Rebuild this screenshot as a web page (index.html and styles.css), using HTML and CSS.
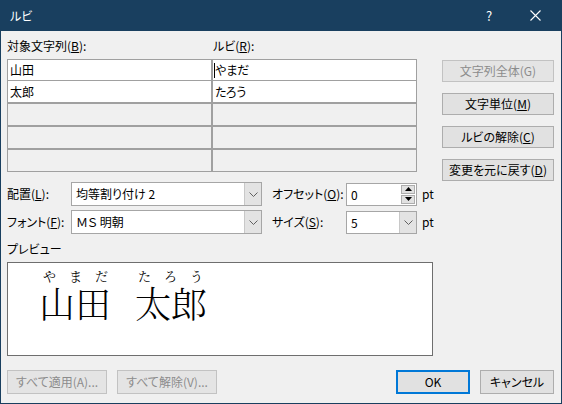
FILE: index.html
```html
<!DOCTYPE html>
<html lang="ja">
<head>
<meta charset="utf-8">
<title>ルビ</title>
<link rel="stylesheet" href="styles.css">
</head>
<body>
<div class="window">
  <div class="titlebar">
    <span class="title">ルビ</span>
    <span class="help">?</span>
    <span class="close">
      <svg width="11" height="11" viewBox="0 0 11 11"><path d="M0.5 0.5 L10.5 10.5 M10.5 0.5 L0.5 10.5" stroke="#fff" stroke-width="1.1" fill="none"/></svg>
    </span>
  </div>
  <div class="body">
    <div class="top">
      <div class="left">
        <div class="labels">
          <span>対象文字列(<u>B</u>):</span>
          <span>ルビ(<u>R</u>):</span>
        </div>
        <div class="table">
          <div class="cell">山田</div>
          <div class="cell"><span class="caret"></span>やまだ</div>
          <div class="cell">太郎</div>
          <div class="cell">たろう</div>
          <div class="cell empty"></div>
          <div class="cell empty"></div>
          <div class="cell empty"></div>
          <div class="cell empty"></div>
          <div class="cell empty"></div>
          <div class="cell empty"></div>
        </div>
        <div class="options">
          <span class="opt-label">配置(<u>L</u>):</span>
          <div class="combo">
            <span class="combo-text">均等割り付け 2</span>
            <span class="combo-arrow"><svg width="9" height="5" viewBox="0 0 9 5"><polyline points="0.5,0.5 4.5,4.5 8.5,0.5" fill="none" stroke="#606060" stroke-width="1"/></svg></span>
          </div>
          <span class="opt-label second">オフセット(<u>O</u>):</span>
          <div class="combo small">
            <span class="combo-text">0</span>
            <span class="spin">
              <span class="spin-btn"><svg width="7" height="4" viewBox="0 0 7 4"><polygon points="3.5,0 7,4 0,4" fill="#000"/></svg></span>
              <span class="spin-btn"><svg width="7" height="4" viewBox="0 0 7 4"><polygon points="0,0 7,0 3.5,4" fill="#000"/></svg></span>
            </span>
          </div>
          <span class="unit">pt</span>

          <span class="opt-label">フォント(<u>F</u>):</span>
          <div class="combo">
            <span class="combo-text">ＭＳ 明朝</span>
            <span class="combo-arrow"><svg width="9" height="5" viewBox="0 0 9 5"><polyline points="0.5,0.5 4.5,4.5 8.5,0.5" fill="none" stroke="#606060" stroke-width="1"/></svg></span>
          </div>
          <span class="opt-label second">サイズ(<u>S</u>):</span>
          <div class="combo small">
            <span class="combo-text">5</span>
            <span class="combo-arrow"><svg width="9" height="5" viewBox="0 0 9 5"><polyline points="0.5,0.5 4.5,4.5 8.5,0.5" fill="none" stroke="#606060" stroke-width="1"/></svg></span>
          </div>
          <span class="unit">pt</span>
        </div>
        <div class="preview-label">プレビュー</div>
        <div class="preview">
          <div class="rgroup">
            <div class="rt"><span>や</span><span>ま</span><span>だ</span></div>
            <div class="rb">山田</div>
          </div>
          <div class="rgroup g2">
            <div class="rt"><span>た</span><span>ろ</span><span>う</span></div>
            <div class="rb">太郎</div>
          </div>
        </div>
      </div>
      <div class="side">
        <button class="btn disabled">文字列全体(G)</button>
        <button class="btn">文字単位(<u>M</u>)</button>
        <button class="btn">ルビの解除(<u>C</u>)</button>
        <button class="btn">変更を元に戻す(<u>D</u>)</button>
      </div>
    </div>
    <div class="footer">
      <button class="btn disabled wide">すべて適用(A)...</button>
      <button class="btn disabled wide">すべて解除(V)...</button>
      <button class="btn default narrow ok">OK</button>
      <button class="btn narrow">キャンセル</button>
    </div>
  </div>
</div>
</body>
</html>
```
FILE: styles.css
```css
* { box-sizing: border-box; }
html, body { margin: 0; padding: 0; background: #f0f0f0; }
body {
  font-family: "Noto Sans CJK JP", "Noto Sans", sans-serif;
  font-size: 12px;
  color: #000;
  font-feature-settings: "palt";
}
u { text-decoration: underline; text-underline-offset: 1px; }

.window {
  width: 562px;
  height: 404px;
  border: 1px solid #193f5f;
  border-top: none;
  background: #f0f0f0;
  overflow: hidden;
}
.titlebar {
  height: 31px;
  background: #193f5f;
  color: #fff;
  display: flex;
  align-items: center;
  padding-left: 9px;
}
.title { font-size: 12px; line-height: 16px; flex: 1; }
.help { font-size: 13px; line-height: 16px; width: 38px; margin-right: 4px; text-align: center; }
.close { width: 46px; display: flex; justify-content: center; align-items: center; margin-right: 3px; }
.close svg { display: block; }

.body { padding: 7px 7px 0 6px; }
.top { display: flex; align-items: flex-start; }
.left { width: 428px; }
.labels {
  display: grid;
  grid-template-columns: 206px 1fr;
  line-height: 16px;
  height: 16px;
  margin-bottom: 5px;
}
.table {
  width: 410px;
  display: grid;
  grid-template-columns: 203px 203px;
  grid-template-rows: 20px 21px 22px 22px 22px;
  column-gap: 2px;
  row-gap: 1px;
  background: #a0a0a0;
  border: 1px solid #a0a0a0;
}
.cell {
  background: #fff;
  padding-left: 2px;
  line-height: 20px;
  display: flex;
  align-items: center;
  white-space: nowrap;
}
.cell.empty { background: #f0f0f0; border-top: 1px solid #a0a0a0; }
.caret {
  display: inline-block;
  width: 1px;
  height: 15px;
  background: #000;
  margin-left: -1px;
}

.options {
  margin-top: 10px;
  display: grid;
  grid-template-columns: 64px 191px 84px 71px auto;
  grid-template-rows: 24px 24px;
  row-gap: 4px;
  align-items: center;
}
.opt-label { line-height: 16px; white-space: nowrap; }
.opt-label.second { padding-left: 10px; }
.combo {
  height: 24px;
  background: #fff;
  border: 1px solid #a6a6a6;
  display: flex;
  align-items: stretch;
}
.combo.small { height: 23px; }
.combo-text { flex: 1; padding-left: 4px; line-height: 21px; white-space: nowrap; }
.combo-arrow {
  width: 17px;
  background: #e3e3e3;
  border-left: 1px solid #c8c8c8;
  display: flex;
  align-items: center;
  justify-content: center;
}
.combo-arrow svg { display: block; }
.spin {
  width: 16px;
  display: flex;
  flex-direction: column;
  padding: 1px;
  gap: 1px;
}
.spin-btn {
  flex: 1;
  background: #e1e1e1;
  border: 1px solid #adadad;
  display: flex;
  align-items: center;
  justify-content: center;
}
.spin-btn svg { display: block; }
.unit { padding-left: 5px; line-height: 16px; }

.preview-label { margin-top: 7px; line-height: 16px; height: 16px; }
.preview {
  margin-top: 5px;
  width: 426px;
  height: 94px;
  background: #fff;
  border: 1px solid #6e6e6e;
  padding: 5px 0 0 31px;
  display: flex;
  align-items: flex-start;
  font-family: "Noto Serif CJK JP", "Noto Sans CJK JP", serif;
  font-feature-settings: normal;
}
.rgroup { display: flex; flex-direction: column; }
.rgroup.g2 { margin-left: 24px; }
.rt {
  display: flex;
  justify-content: space-between;
  font-size: 13px;
  line-height: 16px;
  padding: 0 3px 0 4px;
}
.rgroup.g2 .rt { padding: 0 4px 0 3px; }
.rb { font-size: 36px; line-height: 38px; font-weight: 300; }

.side {
  margin-left: auto;
  width: 112px;
  margin-top: 22px;
  display: flex;
  flex-direction: column;
  gap: 11px;
}
.btn {
  font-family: inherit;
  font-size: 12px;
  font-feature-settings: "palt";
  height: 22px;
  padding: 0;
  background: #e1e1e1;
  border: 1px solid #adadad;
  color: #000;
  line-height: 18px;
  white-space: nowrap;
}
.btn.disabled { color: #8c8c8c; border-color: #c2c2c2; background: #e4e4e4; }

.footer {
  margin-top: 14px;
  display: flex;
  gap: 10px;
}
.footer .btn { height: 24px; }
.btn.wide { width: 100px; }
.btn.narrow { width: 74px; }
.btn.ok { margin-left: auto; }
.btn.default { border: 2px solid #0078d7; }
```
